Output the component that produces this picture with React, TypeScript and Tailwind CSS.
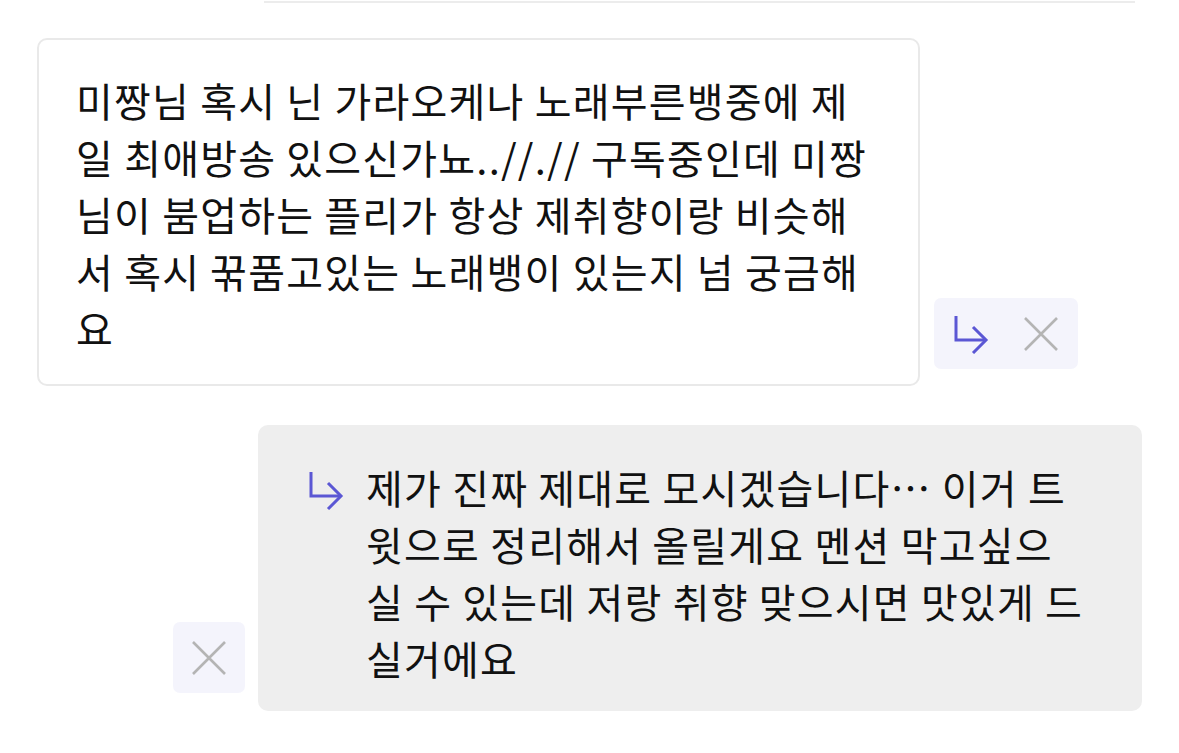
const questionLines = [
  "미짱님 혹시 닌 가라오케나 노래부른뱅중에 제",
  "일 최애방송 있으신가뇨..//.// 구독중인데 미짱",
  "님이 붐업하는 플리가 항상 제취향이랑 비슷해",
  "서 혹시 꾺품고있는 노래뱅이 있는지 넘 궁금해",
  "요",
];

const answerLines = [
  "제가 진짜 제대로 모시겠습니다… 이거 트",
  "윗으로 정리해서 올릴게요 멘션 막고싶으",
  "실 수 있는데 저랑 취향 맞으시면 맛있게 드",
  "실거에요",
];

const ReplyArrow = () => (
  <svg width="36" height="40" viewBox="0 0 36 40" fill="none" className="shrink-0">
    <path d="M3 2V26H33" stroke="#5b57d4" strokeWidth="3" />
    <path d="M20 13L33 26L20 39" stroke="#5b57d4" strokeWidth="3" />
  </svg>
);

const CloseX = () => (
  <svg width="34" height="34" viewBox="0 0 34 34" fill="none" className="shrink-0">
    <path d="M1 1L33 33M33 1L1 33" stroke="#b4b4b4" strokeWidth="2.6" />
  </svg>
);

export default function App() {
  return (
    <div
      className="w-[1179px] h-[753px] bg-white overflow-hidden text-[#111111]"
      style={{ fontFamily: '"Noto Sans CJK KR", "Noto Sans", sans-serif' }}
    >
      {/* tail of the previous card */}
      <div className="ml-[264px] w-[871px] h-[3px] border-b-2 border-[#ececec]" />

      <div className="flex items-end pl-[37px] mt-[35px]">
        <div className="w-[883px] border-2 border-[#e9e9e9] rounded-[10px] bg-white pt-[32px] pb-[27px] pl-[37px]">
          {questionLines.map((line) => (
            <div key={line} className="text-[40px] leading-[57px] tracking-[1.2px] whitespace-nowrap">
              {line}
            </div>
          ))}
        </div>
        <div className="ml-[14px] mb-[17px] w-[144px] h-[71px] rounded-[7px] bg-[#f4f4fc] flex items-center pl-[19px] gap-[35px]">
          <ReplyArrow />
          <CloseX />
        </div>
      </div>

      <div className="flex items-end pl-[173px] mt-[39px]">
        <div className="mb-[18px] w-[72px] h-[71px] rounded-[7px] bg-[#f4f4fc] flex items-center justify-center">
          <CloseX />
        </div>
        <div className="ml-[13px] w-[884px] rounded-[10px] bg-[#eeeeee] flex pl-[50px] pt-[34px] pb-[24px]">
          <div className="mt-[11px] mr-[22px]">
            <ReplyArrow />
          </div>
          <div>
            {answerLines.map((line) => (
              <div key={line} className="text-[40px] leading-[57px] tracking-[1.2px] whitespace-nowrap">
                {line}
              </div>
            ))}
          </div>
        </div>
      </div>
    </div>
  );
}
